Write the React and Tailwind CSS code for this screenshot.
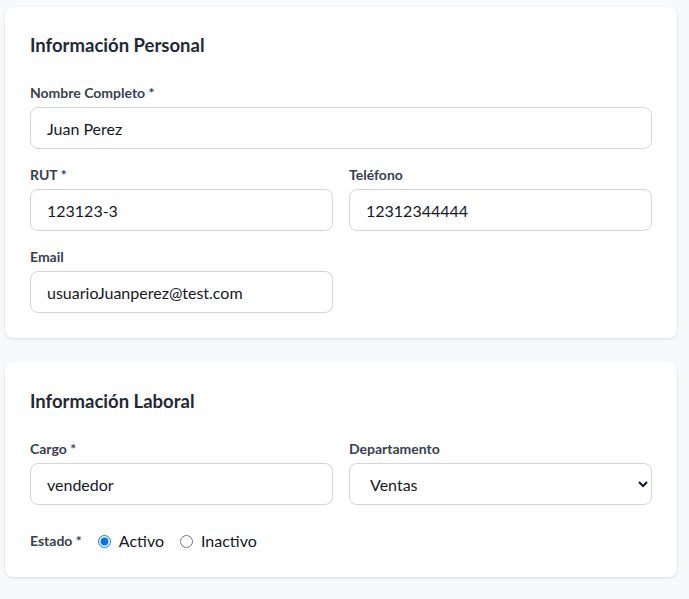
import { useState } from 'react';

const inputCls =
  'w-full h-[42px] px-4 rounded-lg border border-[#d1d5db] bg-white text-base text-[#111827] outline-none';

const Field = ({ label, children }) => (
  <div className="flex flex-col gap-1">
    <label className="text-sm font-bold text-[#374151]">{label}</label>
    {children}
  </div>
);

const App = () => {
  const [form, setForm] = useState({
    nombre: 'Juan Perez',
    rut: '123123-3',
    telefono: '12312344444',
    email: 'usuarioJuanperez@test.com',
    cargo: 'vendedor',
    departamento: 'Ventas',
    estado: 'activo'
  });

  const handleChange = (e) => {
    const { name, value } = e.target;
    setForm(prev => ({ ...prev, [name]: value }));
  };

  return (
    <div className="min-h-screen bg-[#f8f9fa] pl-[5px] pr-[12px] pt-[7px] pb-6 font-['Lato',sans-serif]">
      <div className="flex flex-col gap-6">
        {/* Información Personal */}
        <div className="bg-white rounded-lg shadow-[0_1px_3px_rgba(0,0,0,0.12)] px-[25px] pt-6 pb-[25px]">
          <h2 className="text-[18.5px] leading-7 font-bold text-[#1f2937] mb-6">Información Personal</h2>
          <div className="flex flex-col gap-4">
            <Field label="Nombre Completo *">
              <input name="nombre" value={form.nombre} onChange={handleChange} className={inputCls} />
            </Field>
            <div className="grid grid-cols-2 gap-4">
              <Field label="RUT *">
                <input name="rut" value={form.rut} onChange={handleChange} className={inputCls} />
              </Field>
              <Field label="Teléfono">
                <input name="telefono" value={form.telefono} onChange={handleChange} className={inputCls} />
              </Field>
              <Field label="Email">
                <input name="email" value={form.email} onChange={handleChange} className={inputCls} />
              </Field>
            </div>
          </div>
        </div>

        {/* Información Laboral */}
        <div className="bg-white rounded-lg shadow-[0_1px_3px_rgba(0,0,0,0.12)] px-[25px] pt-[25px] pb-6">
          <h2 className="text-[18.5px] leading-7 font-bold text-[#1f2937] mb-6">Información Laboral</h2>
          <div className="grid grid-cols-2 gap-4">
            <Field label="Cargo *">
              <input name="cargo" value={form.cargo} onChange={handleChange} className={inputCls} />
            </Field>
            <Field label="Departamento">
              <select name="departamento" value={form.departamento} onChange={handleChange} className={inputCls}>
                <option>Ventas</option>
                <option>Marketing</option>
                <option>Administración</option>
              </select>
            </Field>
          </div>
          <div className="flex items-center gap-4 mt-6">
            <span className="text-sm font-bold text-[#374151]">Estado *</span>
            <label className="flex items-center gap-2 text-base text-[#111827]">
              <input type="radio" name="estado" value="activo" checked={form.estado === 'activo'} onChange={handleChange} />
              Activo
            </label>
            <label className="flex items-center gap-2 text-base text-[#111827]">
              <input type="radio" name="estado" value="inactivo" checked={form.estado === 'inactivo'} onChange={handleChange} />
              Inactivo
            </label>
          </div>
        </div>
      </div>
    </div>
  );
};

export default App;
